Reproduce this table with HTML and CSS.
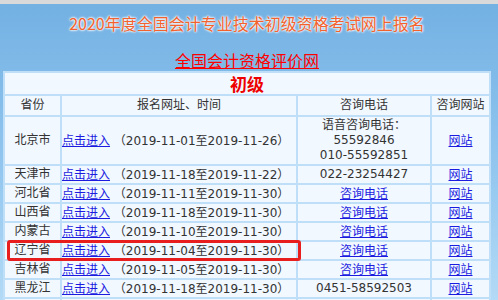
FILE: index.html
```html
<!DOCTYPE html>
<html lang="zh-CN">
<head>
<meta charset="utf-8">
<title>2020年度全国会计专业技术初级资格考试网上报名</title>
<link rel="stylesheet" href="styles.css">
</head>
<body>
<div class="topbar"></div>
<div class="page">
  <h1 class="title">2020年度全国会计专业技术初级资格考试网上报名</h1>
  <div class="sitelink-row"><a class="sitelink" href="#">全国会计资格评价网</a></div>
  <table class="reg">
    <colgroup><col class="c1"><col class="c2"><col class="c3"><col class="c4"></colgroup>
    <tr class="level-row"><td colspan="4" class="level">初级</td></tr>
    <tr class="head-row"><td>省份</td><td>报名网址、时间</td><td>咨询电话</td><td>咨询网站</td></tr>
    <tr class="tall-row"><td>北京市</td><td class="l"><a href="#">点击进入</a> （2019-11-01至2019-11-26）</td><td>语音咨询电话：<br>55592846<br>010-55592851</td><td><a href="#">网站</a></td></tr>
    <tr><td>天津市</td><td class="l"><a href="#">点击进入</a> （2019-11-18至2019-11-22）</td><td>022-23254427</td><td><a href="#">网站</a></td></tr>
    <tr><td>河北省</td><td class="l"><a href="#">点击进入</a> （2019-11-11至2019-11-30）</td><td><a href="#">咨询电话</a></td><td><a href="#">网站</a></td></tr>
    <tr><td>山西省</td><td class="l"><a href="#">点击进入</a> （2019-11-18至2019-11-30）</td><td><a href="#">咨询电话</a></td><td><a href="#">网站</a></td></tr>
    <tr><td>内蒙古</td><td class="l"><a href="#">点击进入</a> （2019-11-10至2019-11-30）</td><td><a href="#">咨询电话</a></td><td><a href="#">网站</a></td></tr>
    <tr><td>辽宁省</td><td class="l"><a href="#">点击进入</a> （2019-11-04至2019-11-30）</td><td><a href="#">咨询电话</a></td><td><a href="#">网站</a></td></tr>
    <tr><td>吉林省</td><td class="l"><a href="#">点击进入</a> （2019-11-05至2019-11-30）</td><td><a href="#">咨询电话</a></td><td><a href="#">网站</a></td></tr>
    <tr><td>黑龙江</td><td class="l"><a href="#">点击进入</a> （2019-11-18至2019-11-30）</td><td>0451-58592503</td><td><a href="#">网站</a></td></tr>
    <tr><td></td><td></td><td></td><td></td></tr>
  </table>
</div>
<div class="highlight"></div>
</body>
</html>
```
FILE: styles.css
```css
html, body {
  margin: 0;
  padding: 0;
}
body {
  width: 498px;
  height: 300px;
  overflow: hidden;
  position: relative;
  background: linear-gradient(to bottom, #d9d9d9 0, #d9d9d9 4px, #73b1e3 4px, #8fc4ee 150px, #b3daf6 300px);
  font-family: "DejaVu Sans", "Noto Sans CJK SC", sans-serif;
  font-size: 12px;
  color: #333;
}
.topbar {
  height: 4px;
}
.page {
  width: 488px;
  padding-left: 3px;
}
.title {
  margin: 9px 0 0;
  height: 20px;
  line-height: 20px;
  font-family: "Noto Sans CJK SC", sans-serif;
  font-size: 16px;
  font-weight: normal;
  text-align: center;
  color: #f2622f;
  text-shadow: 0 0 2px #fff, 0 0 2px #fff, 0 0 3px #fff;
}
.sitelink-row {
  margin-top: 17px;
  height: 20px;
  line-height: 20px;
  text-align: center;
}
.sitelink {
  font-family: "Noto Sans CJK SC", sans-serif;
  font-size: 16px;
  color: #f00;
  text-decoration: underline;
}
.reg {
  margin-top: 1px;
  width: 488px;
  table-layout: fixed;
  border-collapse: separate;
  border-spacing: 2px;
  background: #bfdff8;
}
.c1 { width: 55px; }
.c2 { width: 234px; }
.c3 { width: 132px; }
.c4 { width: 57px; }
.reg td {
  background: #f1f8ff;
  padding: 0;
  height: 17px;
  line-height: 15px;
  text-align: center;
  white-space: nowrap;
  overflow: hidden;
}
.reg td.l {
  text-align: left;
}
.reg a {
  color: #1c1ce0;
  text-decoration: underline;
  font-family: "Noto Sans CJK SC", sans-serif;
}
.level-row td {
  height: 21px;
  overflow: visible;
  font-family: "Noto Sans CJK SC", sans-serif;
  font-size: 17px;
  font-weight: bold;
  color: #ee0000;
  line-height: 21px;
}
.head-row td {
  height: 19px;
}
.tall-row td {
  height: 47px;
}
.highlight {
  position: absolute;
  left: 7px;
  top: 240px;
  width: 288px;
  height: 15px;
  border: 3px solid #e81e1e;
  border-radius: 3px;
}
```
